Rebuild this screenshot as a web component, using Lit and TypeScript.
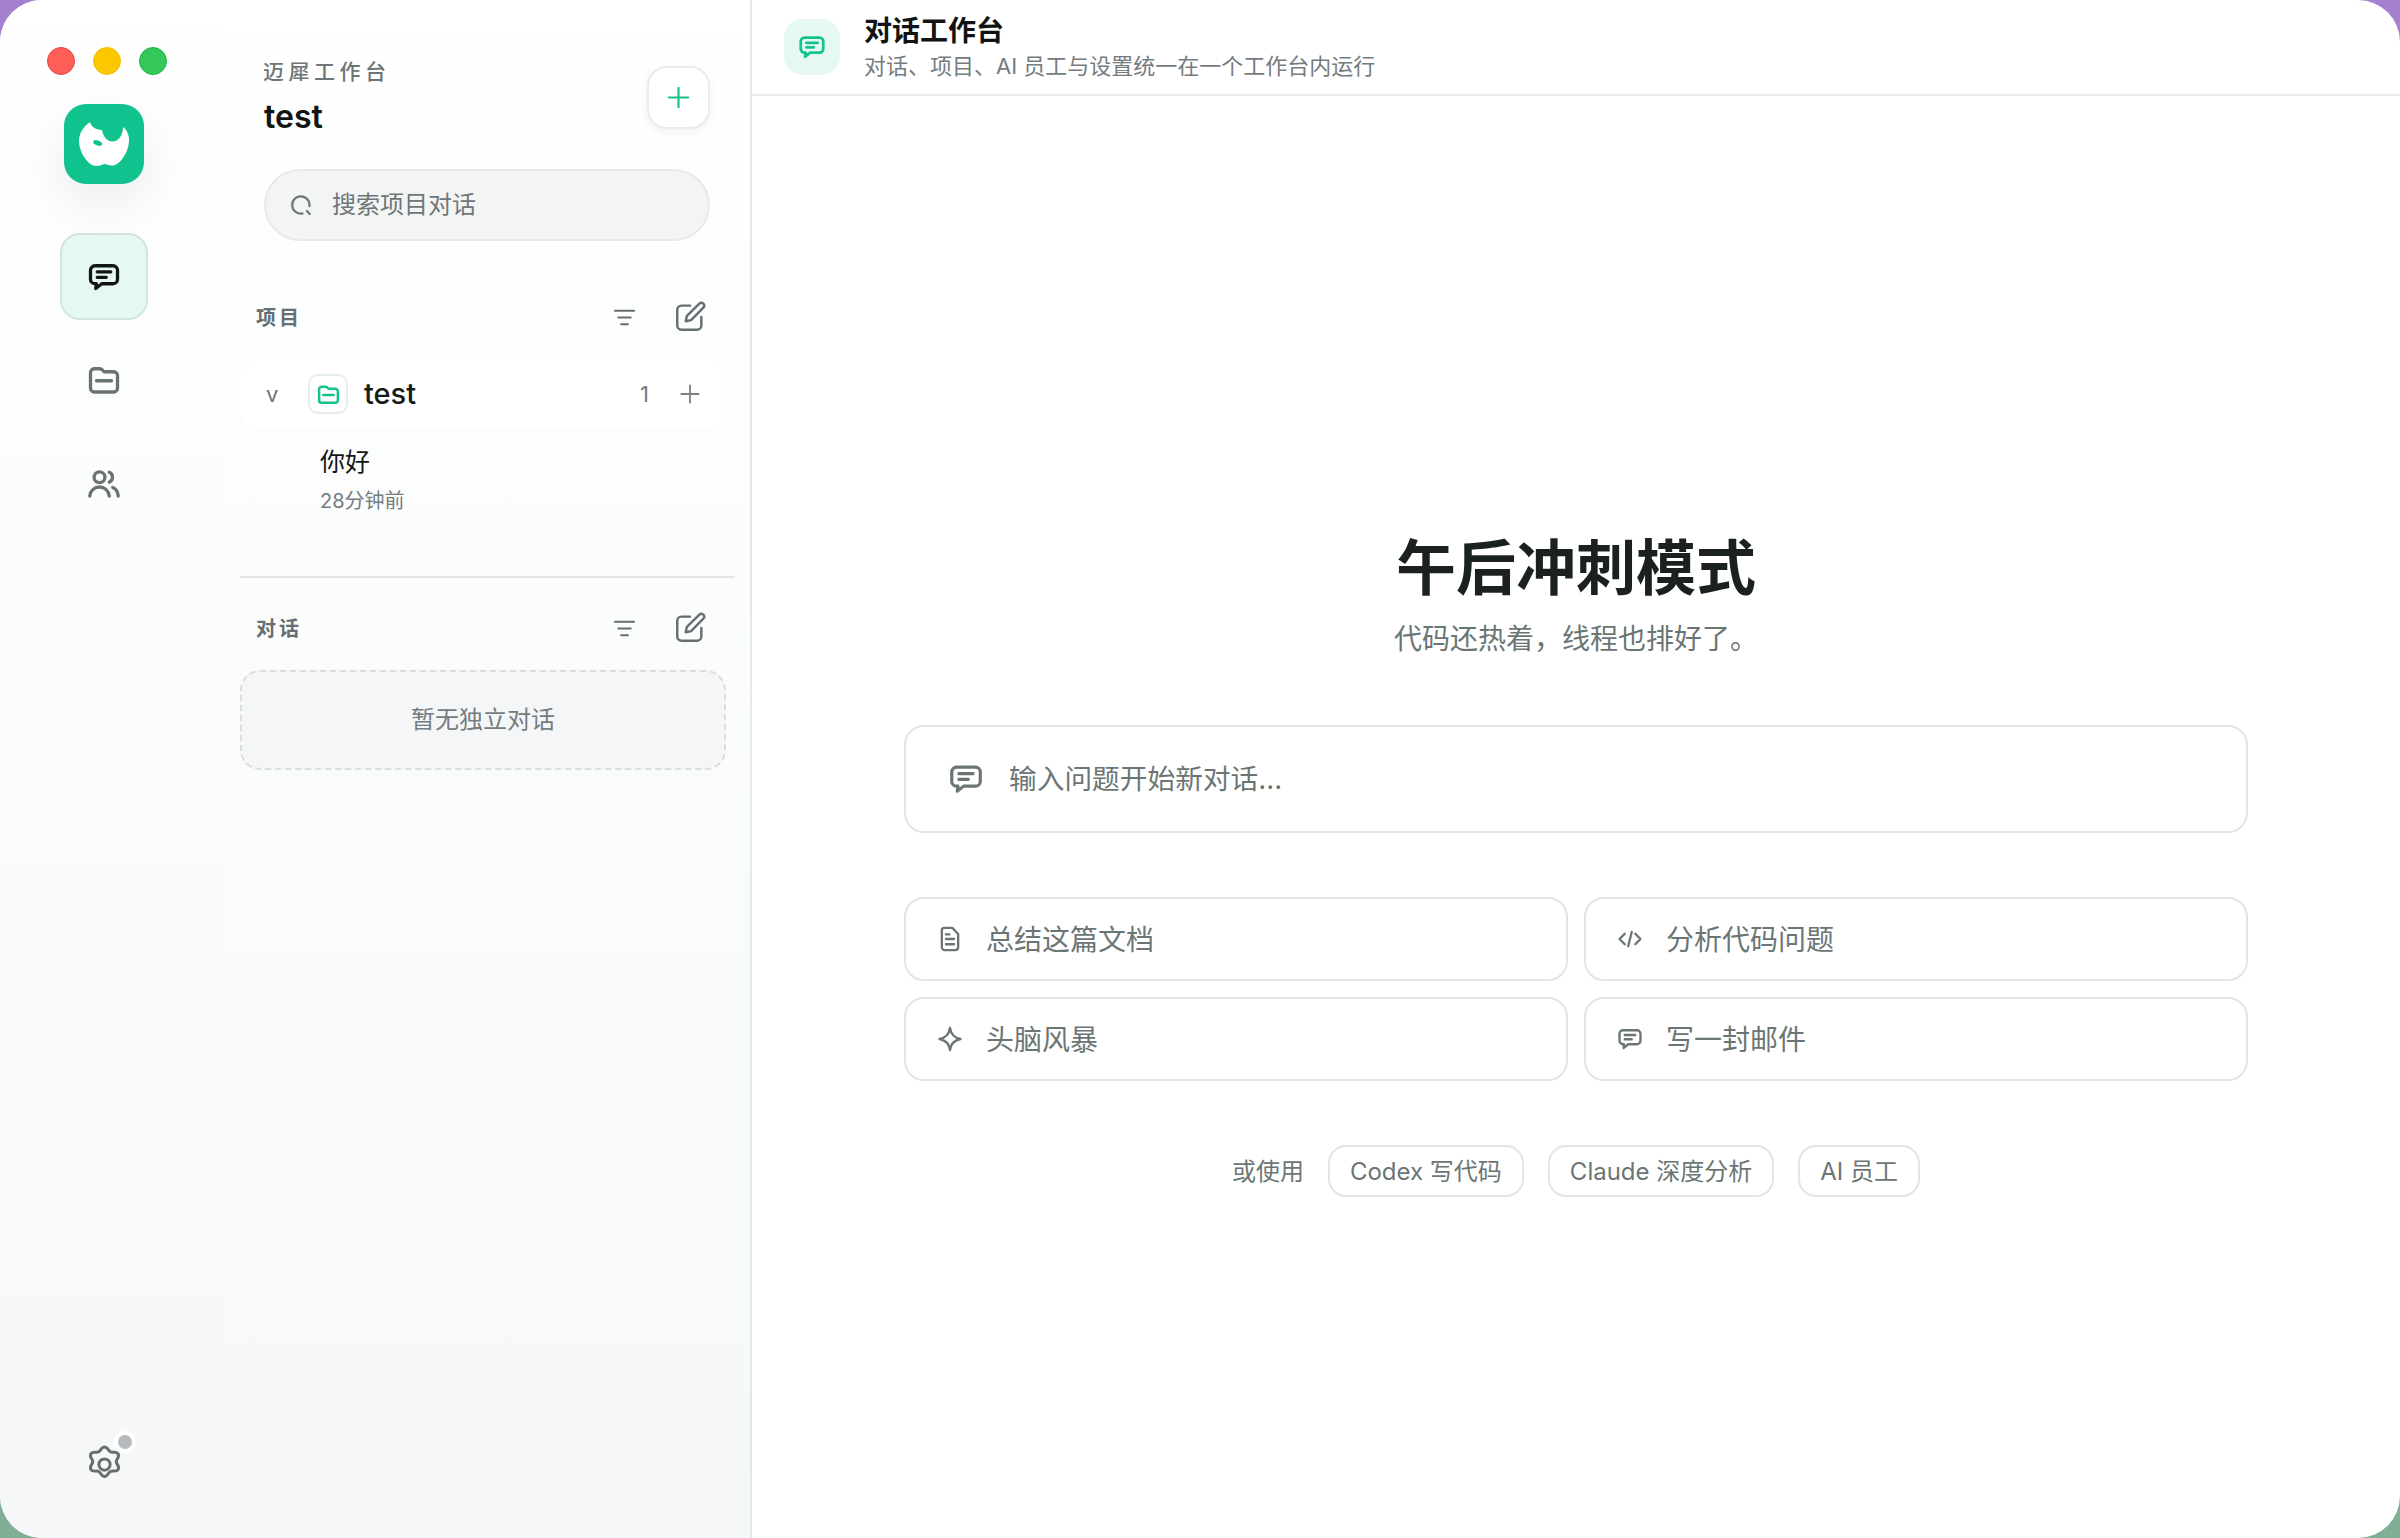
import {LitElement, css, html, svg} from 'lit';
import {customElement} from 'lit/decorators.js';

const chatIcon = svg`<path d="M6 4.500h12a3 3 0 0 1 3 3v6a3 3 0 0 1-3 3h-7.500l-4 3.200.4-3.200H6a3 3 0 0 1-3-3v-6a3 3 0 0 1 3-3z"/><path d="M7.500 8.600h9M7.500 12.200h6"/>`;
const folderIcon = svg`<path d="M3 7a2.500 2.500 0 0 1 2.500-2.500h3.600c.7 0 1.300.3 1.800.8l1.100 1.200h6.500A2.500 2.500 0 0 1 21 9v8.500a2.500 2.500 0 0 1-2.500 2.500h-13A2.500 2.500 0 0 1 3 17.500z"/><path d="M7 12.500h10"/>`;
const usersIcon = svg`<circle cx="9" cy="7.500" r="3.600"/><path d="M2.500 20c.5-3.800 3.200-6 6.500-6s6 2.200 6.500 6"/><path d="M15.500 4.200a3.600 3.600 0 0 1 0 6.600"/><path d="M17.800 14.300c2 .8 3.400 2.800 3.700 5.700"/>`;
const gearIcon = svg`<path d="M12 2.600c1.200 0 1.700 1 2.300 1.900.5.700 1.300 1.100 2.200 1 1.100-.1 2.200-.2 2.800.9s0 2-.6 2.900c-.5.700-.5 1.700 0 2.400.6.900 1.200 1.800.6 2.900s-1.700 1-2.800.9c-.9-.1-1.700.3-2.200 1-.6.900-1.100 1.900-2.300 1.900s-1.700-1-2.300-1.900c-.5-.7-1.300-1.100-2.200-1-1.100.1-2.200.2-2.800-.9s0-2 .6-2.900c.5-.7.5-1.700 0-2.400-.6-.9-1.200-1.800-.6-2.900s1.700-1 2.800-.9c.9.1 1.700-.3 2.200-1 .6-.9 1.100-1.900 2.300-1.900z"/><circle cx="12" cy="12" r="3"/>`;
const plusIcon = svg`<path d="M12 4v16M4 12h16"/>`;
const searchIcon = svg`<path d="M13.500 19.800A8 8 0 1 1 19.800 13"/><path d="M17.500 17.500l2.500 2.800"/>`;
const filterIcon = svg`<path d="M3.500 6h17M6.500 12h11M9 18h6"/>`;
const editIcon = svg`<path d="M12 4H6a3 3 0 0 0-3 3v11a3 3 0 0 0 3 3h11a3 3 0 0 0 3-3v-6"/><path d="M9 15l.8-3.800L18.600 2.600a1.900 1.900 0 0 1 2.800 2.800l-8.600 8.800z"/>`;
const docIcon = svg`<path d="M7 2.500h7l5 5.200V19a2.500 2.500 0 0 1-2.500 2.500h-9A2.500 2.500 0 0 1 5 19V4.500a2 2 0 0 1 2-2z"/><path d="M8.500 12h7M8.500 16.500h7M8.500 8h3"/>`;
const codeIcon = svg`<path d="M7.500 7.500L3 12l4.500 4.500M16.500 7.500L21 12l-4.500 4.500M13.500 6l-3 12"/>`;
const sparkIcon = svg`<path d="M12 2.500c.8 5.500 3.500 8.500 9 9.500-5.500 1-8.200 4-9 9.500-.8-5.500-3.500-8.500-9-9.500 5.500-1 8.200-4 9-9.500z"/>`;

function icon(body: unknown, size: number, stroke = 2) {
    return html`<svg class="icon" width=${size} height=${size} viewBox="0 0 24 24" fill="none" stroke="currentColor"
        stroke-width=${stroke} stroke-linecap="round" stroke-linejoin="round">${body}</svg>`;
}

const prompts = [
    {icon: docIcon, text: '总结这篇文档'},
    {icon: codeIcon, text: '分析代码问题'},
    {icon: sparkIcon, text: '头脑风暴'},
    {icon: chatIcon, text: '写一封邮件'},
];

const pills = ['Codex 写代码', 'Claude 深度分析', 'AI 员工'];

@customElement('app-root')
export class AppRoot extends LitElement {
    static styles = css`
        :host {
            display: block;
            width: 2400px;
            height: 1538px;
            overflow: hidden;
            font-family: Inter, "Noto Sans CJK SC", "Noto Sans", sans-serif;
            color: #161a19;
            background: linear-gradient(180deg, #a57fcf 0%, #8fa8b0 50%, #80ae96 100%);
        }

        .icon {
            display: block;
            flex: none;
        }

        .window {
            display: flex;
            height: 1538px;
            border-radius: 42px;
            overflow: hidden;
            background: #ffffff;
        }

        .rail {
            width: 224px;
            flex: none;
            display: flex;
            flex-direction: column;
            align-items: center;
            box-sizing: border-box;
            padding: 47px 16px 51.500px 0;
            background: linear-gradient(180deg, #ffffff 0%, #f5f7f8 100%);
        }

        .lights {
            display: flex;
            gap: 18px;
            align-self: flex-start;
            margin-left: 47px;
        }

        .lights span {
            width: 28px;
            height: 28px;
            border-radius: 50%;
            box-sizing: border-box;
            border: 1px solid transparent;
        }

        .red { background: #ff5f57; border-color: #e8444a !important; }
        .yellow { background: #fdc700; border-color: #f5c000 !important; }
        .green { background: #34c759; border-color: #1fb542 !important; }

        .logo {
            width: 80px;
            height: 80px;
            margin-top: 29px;
            border-radius: 22px;
            background: #10c28e;
            box-shadow: 0 20px 50px rgba(20, 40, 35, 0.08);
            display: flex;
            align-items: center;
            justify-content: center;
        }

        .nav {
            display: flex;
            flex-direction: column;
            gap: 16.500px;
            margin-top: 49px;
        }

        .nav-item {
            width: 88px;
            height: 87px;
            box-sizing: border-box;
            border-radius: 20px;
            display: flex;
            align-items: center;
            justify-content: center;
            color: #69736f;
            border: 2px solid transparent;
        }

        .nav-item.active {
            background: #e6f8f2;
            border-color: #cfe5de;
            color: #111514;
        }

        .settings {
            margin-top: auto;
            position: relative;
            color: #66716d;
        }

        .settings .dot {
            position: absolute;
            top: -11px;
            right: -9.500px;
            width: 22px;
            height: 22px;
            box-sizing: border-box;
            border-radius: 50%;
            background: #b7babd;
            border: 4px solid #ffffff;
        }

        .side {
            width: 528px;
            flex: none;
            box-sizing: border-box;
            border-right: 2px solid #e3e9e8;
            padding: 0 16px 0 16px;
            background: linear-gradient(180deg, #ffffff 0%, #fafbfb 55%, #f6f7f8 100%);
        }

        .side-head {
            display: flex;
            align-items: center;
            justify-content: space-between;
            padding: 58px 24px 0 23px;
        }

        .brand {
            font-size: 21px;
            line-height: 28px;
            letter-spacing: 4.500px;
            font-weight: 500;
            color: #6d7577;
        }

        .ws-name {
            font-size: 32px;
            line-height: 38px;
            font-weight: 600;
            margin-top: 12px;
            margin-left: 1px;
            color: #111413;
        }

        .add {
            width: 63px;
            height: 63px;
            box-sizing: border-box;
            border-radius: 20px;
            background: #ffffff;
            border: 2px solid #e9eceb;
            box-shadow: 0 3px 8px rgba(20, 40, 35, 0.06);
            color: #14c28e;
            display: flex;
            align-items: center;
            justify-content: center;
        }

        .search {
            height: 72px;
            margin: 33px 24px 0 24px;
            box-sizing: border-box;
            border-radius: 36px;
            background: #f3f4f4;
            border: 2px solid #e8eaea;
            display: flex;
            align-items: center;
            gap: 18px;
            padding-left: 22px;
            color: #6f7678;
            font-size: 24px;
        }

        .search span {
            padding-bottom: 5px;
        }

        .section-head {
            display: flex;
            align-items: center;
            height: 40px;
            padding: 0 27px 0 16px;
            color: #656e72;
        }

        .section-head .label {
            font-size: 20px;
            font-weight: 700;
            letter-spacing: 3px;
            flex: 1;
            padding-bottom: 2px;
        }

        .section-head .actions {
            display: flex;
            align-items: center;
            gap: 35.500px;
        }

        .projects {
            margin-top: 56px;
        }

        .project {
            height: 70px;
            width: 486px;
            box-sizing: border-box;
            margin-top: 22px;
            border-radius: 20px;
            background: #ffffff;
            display: flex;
            align-items: center;
            padding: 0 23px 0 26px;
        }

        .chev {
            width: 42px;
            font-size: 22px;
            color: #6c7478;
        }

        .folder-box {
            width: 40px;
            height: 40px;
            box-sizing: border-box;
            border: 2px solid #e6eeec;
            border-radius: 10px;
            display: flex;
            align-items: center;
            justify-content: center;
            color: #14c28e;
            background: #ffffff;
        }

        .project .name {
            flex: 1;
            margin-left: 16px;
            font-size: 29px;
            font-weight: 500;
            padding-bottom: 2px;
        }

        .count {
            font-size: 22px;
            color: #747c80;
            margin-right: 28px;
        }

        .project .plus {
            color: #7c8386;
        }

        .thread {
            padding: 15px 0 0 80px;
        }

        .thread .title {
            font-size: 25px;
            line-height: 36px;
            color: #141716;
        }

        .thread .time {
            font-size: 20px;
            line-height: 30px;
            margin-top: 6px;
            color: #747c80;
        }

        .divider {
            height: 2px;
            width: 495px;
            margin-top: 60px;
            background: #dfe6e4;
        }

        .convos {
            margin-top: 30px;
        }

        .empty {
            width: 486px;
            height: 100px;
            margin-top: 22px;
            box-sizing: border-box;
            padding-bottom: 6px;
            border: 2px dashed #d9dfde;
            border-radius: 20px;
            background: #f5f6f8;
            display: flex;
            align-items: center;
            justify-content: center;
            font-size: 24px;
            color: #747c80;
        }

        main {
            flex: 1;
            display: flex;
            flex-direction: column;
            min-width: 0;
        }

        .top {
            height: 96px;
            box-sizing: border-box;
            border-bottom: 2px solid #e6eceb;
            display: flex;
            align-items: center;
            gap: 24px;
            padding: 0 32px;
        }

        .top-icon {
            width: 56px;
            height: 56px;
            border-radius: 19px;
            background: #e6f8f2;
            color: #14c28e;
            display: flex;
            align-items: center;
            justify-content: center;
        }

        .top-title {
            font-size: 28px;
            line-height: 34px;
            font-weight: 700;
            color: #111413;
        }

        .top-sub {
            font-size: 22px;
            line-height: 30px;
            margin-top: 3px;
            color: #747c80;
        }

        .center {
            flex: 1;
            display: flex;
            flex-direction: column;
            align-items: center;
            padding-top: 430px;
        }

        h1 {
            margin: 0;
            font-size: 60px;
            line-height: 84px;
            font-weight: 700;
            color: #1a2120;
        }

        .lead {
            font-size: 28px;
            line-height: 40px;
            margin-top: 9px;
            color: #6b7674;
        }

        .ask {
            width: 1344px;
            height: 108px;
            margin-top: 66px;
            box-sizing: border-box;
            border: 2px solid #e0e6e5;
            border-radius: 20px;
            display: flex;
            align-items: center;
            gap: 24px;
            padding-left: 41px;
            font-size: 27.700px;
            color: #6b7674;
        }

        .ask span {
            padding-bottom: 5px;
        }

        .grid {
            width: 1344px;
            display: grid;
            grid-template-columns: 1fr 1fr;
            gap: 16px;
            margin-top: 64px;
        }

        .prompt {
            height: 84px;
            box-sizing: border-box;
            border: 2px solid #e0e6e5;
            border-radius: 20px;
            display: flex;
            align-items: center;
            gap: 22.500px;
            padding-left: 29.500px;
            font-size: 28px;
            color: #6b7674;
        }

        .prompt span {
            padding-bottom: 3px;
        }

        .alt {
            display: flex;
            align-items: center;
            gap: 24px;
            margin-top: 64px;
            font-size: 24px;
            color: #6b7674;
        }

        .alt > span {
            padding-bottom: 3px;
        }

        .pill {
            height: 52px;
            box-sizing: border-box;
            border: 2px solid #e0e6e5;
            border-radius: 18px;
            display: flex;
            align-items: center;
            padding: 0 20px 3px;
        }
    `;

    render() {
        return html`
            <div class="window">
                <div class="rail">
                    <div class="lights"><span class="red"></span><span class="yellow"></span><span class="green"></span></div>
                    <div class="logo">
                        <svg width="50" height="44" viewBox="0 0 50 44">
                            <path fill="#fff" d="M11 0C12 4 16 8 23 8C24 14 28 20 34 19.500C40 19 44 13 44 5C48 8 50 13 50 18C50 28 44 38 38 42C33 45 30 43 26 42C22 43 18 45 13 43C6 39 0 28 0 19C0 11 5 4 11 0Z"/>
                            <ellipse fill="#10c28e" cx="18.700" cy="21" rx="4.500" ry="2.500" transform="rotate(20 18.700 21)"/>
                        </svg>
                    </div>
                    <div class="nav">
                        <div class="nav-item active">${icon(chatIcon, 36, 2.200)}</div>
                        <div class="nav-item">${icon(folderIcon, 36, 2.200)}</div>
                        <div class="nav-item">${icon(usersIcon, 36, 2.200)}</div>
                    </div>
                    <div class="settings">${icon(gearIcon, 45, 1.600)}<span class="dot"></span></div>
                </div>

                <div class="side">
                    <div class="side-head">
                        <div>
                            <div class="brand">迈犀工作台</div>
                            <div class="ws-name">test</div>
                        </div>
                        <div class="add">${icon(plusIcon, 29, 1.800)}</div>
                    </div>
                    <div class="search">${icon(searchIcon, 26, 2)}<span>搜索项目对话</span></div>

                    <div class="projects section-head">
                        <span class="label">项目</span>
                        <div class="actions">${icon(filterIcon, 27, 1.800)}${icon(editIcon, 34, 1.700)}</div>
                    </div>
                    <div class="project">
                        <span class="chev">v</span>
                        <span class="folder-box">${icon(folderIcon, 25, 2.400)}</span>
                        <span class="name">test</span>
                        <span class="count">1</span>
                        <span class="plus">${icon(plusIcon, 26, 1.700)}</span>
                    </div>
                    <div class="thread">
                        <div class="title">你好</div>
                        <div class="time">28分钟前</div>
                    </div>
                    <div class="divider"></div>
                    <div class="convos section-head">
                        <span class="label">对话</span>
                        <div class="actions">${icon(filterIcon, 27, 1.800)}${icon(editIcon, 34, 1.700)}</div>
                    </div>
                    <div class="empty">暂无独立对话</div>
                </div>

                <main>
                    <div class="top">
                        <div class="top-icon">${icon(chatIcon, 30, 2.200)}</div>
                        <div>
                            <div class="top-title">对话工作台</div>
                            <div class="top-sub">对话、项目、AI 员工与设置统一在一个工作台内运行</div>
                        </div>
                    </div>
                    <div class="center">
                        <h1>午后冲刺模式</h1>
                        <div class="lead">代码还热着，线程也排好了。</div>
                        <div class="ask">${icon(chatIcon, 38, 2)}<span>输入问题开始新对话...</span></div>
                        <div class="grid">
                            ${prompts.map(p => html`<div class="prompt">${icon(p.icon, 28, 2)}<span>${p.text}</span></div>`)}
                        </div>
                        <div class="alt">
                            <span>或使用</span>
                            ${pills.map(p => html`<div class="pill">${p}</div>`)}
                        </div>
                    </div>
                </main>
            </div>
        `;
    }
}
